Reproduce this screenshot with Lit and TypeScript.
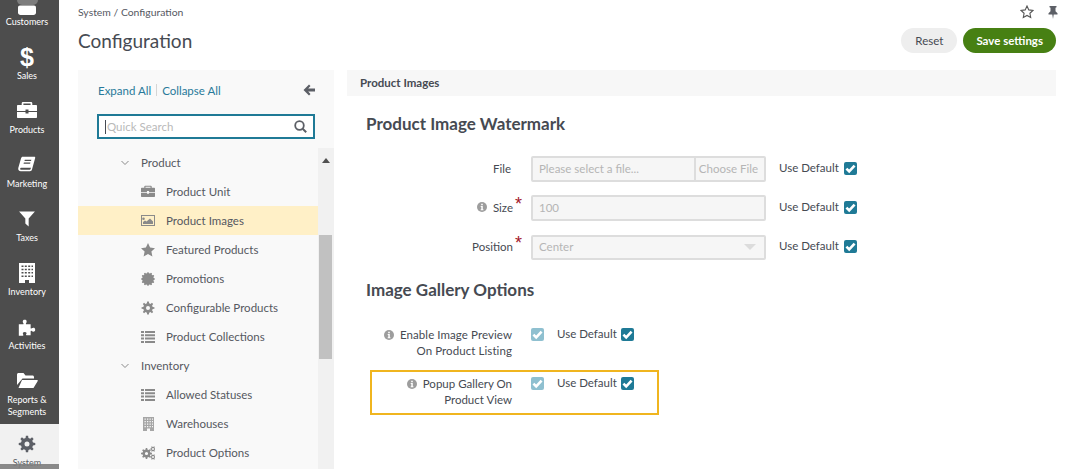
import { LitElement, css, html, svg } from 'lit';
import type { TemplateResult } from 'lit';
import { customElement } from 'lit/decorators.js';

// toothed outline for gear / certificate icons
function toothed(cx: number, cy: number, outer: number, inner: number, teeth: number, hole = 0) {
  const pts: string[] = [];
  const step = (Math.PI * 2) / teeth;
  for (let i = 0; i < teeth; i++) {
    const a = i * step;
    [[-0.3, inner], [-0.17, outer], [0.17, outer], [0.3, inner]].forEach(([k, r]) => {
      const x = cx + Math.cos(a + k * step) * r;
      const y = cy + Math.sin(a + k * step) * r;
      pts.push(`${x.toFixed(2)} ${y.toFixed(2)}`);
    });
  }
  let d = `M${pts.join('L')}Z`;
  if (hole) d += `M${cx - hole} ${cy}a${hole} ${hole} 0 1 0 ${hole * 2} 0a${hole} ${hole} 0 1 0 ${-hole * 2} 0Z`;
  return d;
}

const ICONS: Record<string, TemplateResult> = {
  customers: svg`<path d="M3 12.500h14c1.200 0 2 .8 2 2v5c0 1.500-1 2.500-2.500 2.500h-13C2 22 1 21 1 19.500v-5c0-1.200.8-2 2-2z"/>`,
  briefcase: svg`<path fill-rule="evenodd" d="M6 1h8c.8 0 1.300.6 1.300 1.300V4H19c.6 0 1 .4 1 1v5H11.500V8.500h-3V10H0V5c0-.6.4-1 1-1h3.700V2.300C4.700 1.600 5.200 1 6 1zm.4 1.600V4h7.200V2.600zM0 11h8.500v1.500h3V11H20v5c0 .6-.4 1-1 1H1c-.6 0-1-.4-1-1z"/>`,
  book: svg`<path fill-rule="evenodd" d="M5.500 1H18c.8 0 1.200.6 1 1.400L15.500 15c-.3 1.200-1.100 1.900-2.300 1.900H3.200C1.200 16.900-.1 15.300.4 13.300L3.400 2.900C3.700 1.700 4.400 1 5.500 1zM7.600 4.300l-.4 1.300h7.200l.4-1.300zm-1 3l-.4 1.300h7.200l.4-1.300zM3.400 13c-.5 0-.9.4-.9 1s.4 1.100 1 1.100h9.500c.5 0 .8-.3.9-.7l.5-1.400z"/>`,
  filter: svg`<path d="M.5 1h19L12 9.500V19l-4-3.500V9.500z"/>`,
  building: svg`<path fill-rule="evenodd" d="M2 0h16v20H12v-3H8v3H2zm2.500 2.500v1.500H6.500V2.500zm3.300 0v1.500h2V2.500zm3.400 0v1.500h2V2.500zm3.300 0v1.500h1.500V2.500zm-10 3.300v1.500H6.500V5.800zm3.300 0v1.500h2V5.800zm3.400 0v1.500h2V5.800zm3.300 0v1.500h1.500V5.800zm-10 3.300v1.500H6.500V9.100zm3.300 0v1.500h2V9.100zm3.400 0v1.500h2V9.100zm3.300 0v1.500h1.500V9.100zm-10 3.300v1.500H6.500v-1.500zm3.300 0v1.500h2v-1.500zm3.400 0v1.500h2v-1.500zm3.300 0v1.500h1.500v-1.500z"/>`,
  puzzle: svg`<path d="M1 7h4.500c.8 0 1-.5.5-1.200C5 4.500 5 2 7.500 2S10 4.500 9 5.800C8.500 6.500 8.700 7 9.500 7H14v4c0 .7.500 1 1.200.5 1.300-1 3.800-1 3.800 1.500s-2.500 2.500-3.800 1.500c-.7-.5-1.200-.2-1.200.5v4H9.500c-.7 0-.8-.5-.3-1.200C10 17 9.500 15.500 7.500 15.500S5 17 5.800 18.300c.5.7.3 1.200-.4 1.200H1z"/>`,
  folder: svg`<path d="M1.500 2h5l2 2.500h7c.8 0 1.500.7 1.500 1.500v1.500H5.500L0 14V3.500C0 2.700.7 2 1.500 2zM5 9h15c.7 0 1 .6.6 1.200L16.500 17H1.500z"/>`,
  gear: svg`<path fill-rule="evenodd" d=${toothed(10, 10, 10, 7.400, 8, 3)}/>`,
  image: svg`<path fill-rule="evenodd" d="M0 1h14v11H0zm1 1v9h12V2zm1.500 1.500a1.300 1.300 0 1 1 0 2.600 1.300 1.300 0 0 1 0-2.600zM2 10V8l2-1.500 1.500 1L9 4.500l3 3V10z"/>`,
  star: svg`<path d="M7 0l2.100 4.600 5 .6-3.700 3.400 1 5L7 11.100 2.600 13.600l1-5L-.1 5.200l5-.6z"/>`,
  promo: svg`<path d=${toothed(7, 7, 6.900, 5.800, 12)}/>`,
  cog: svg`<path fill-rule="evenodd" d=${toothed(7, 7, 6.500, 4.800, 8, 2)}/>`,
  list: svg`<path d="M0 1h3v2H0zm4 0h10v2H4zM0 4.300h3v2H0zm4 0h10v2H4zM0 7.600h3v2H0zm4 0h10v2H4zM0 11h3v2H0zm4 0h10v2H4z"/>`,
  warehouse: svg`<path fill-rule="evenodd" opacity=".75" d="M2 0h11v14H9v-2.500H6V14H2zm1.500 1.500v1.200h1.300V1.500zm2.500 0v1.200h1.300V1.500zm2.500 0v1.200h1.300V1.500zm2.500 0v1.200h1V1.500zm-7.500 2.500v1.200h1.300V4zM6 4v1.200h1.300V4zm2.500 0v1.200h1.300V4zM11 4v1.200h1V4zM3.500 6.500v1.200h1.300V6.500zm2.500 0v1.200h1.300V6.500zm2.500 0v1.200h1.300V6.500zm2.500 0v1.200h1V6.500zM3.500 9v1.200h1.300V9zM6 9v1.200h1.300V9zm2.500 0v1.200h1.300V9zM11 9v1.200h1V9z"/>`,
  cogs: svg`<path fill-rule="evenodd" d=${toothed(5.500, 7.500, 5.500, 4, 8, 1.600)}/><path fill-rule="evenodd" d=${toothed(12, 3, 2.800, 2, 6, 1)}/><path fill-rule="evenodd" d=${toothed(12, 11, 2.800, 2, 6, 1)}/>`,
};

const NAV = [
  { label: 'Customers', icon: 'customers', box: '0 0 20 20' },
  { label: 'Sales', icon: 'dollar', box: '' },
  { label: 'Products', icon: 'briefcase', box: '0 0 20 20' },
  { label: 'Marketing', icon: 'book', box: '-1 -1 22 22' },
  { label: 'Taxes', icon: 'filter', box: '-2 -2 24 24' },
  { label: 'Inventory', icon: 'building', box: '0 0 20 20' },
  { label: 'Activities', icon: 'puzzle', box: '-1 -1 22 22' },
  { label: 'Reports & Segments', icon: 'folder', box: '0 0 20 20' },
  { label: 'System', icon: 'gear', box: '-2 -2 24 24', active: true },
];

const TREE = [
  { label: 'Product', group: true },
  { label: 'Product Unit', icon: 'briefcase', box: '0 0 20 20' },
  { label: 'Product Images', icon: 'image', active: true },
  { label: 'Featured Products', icon: 'star' },
  { label: 'Promotions', icon: 'promo' },
  { label: 'Configurable Products', icon: 'cog' },
  { label: 'Product Collections', icon: 'list' },
  { label: 'Inventory', group: true },
  { label: 'Allowed Statuses', icon: 'list' },
  { label: 'Warehouses', icon: 'warehouse' },
  { label: 'Product Options', icon: 'cogs' },
];

const info = html`<svg class="info" viewBox="0 0 10 10"><circle cx="5" cy="5" r="5" fill="#9d9d9d"/><path d="M4.200 1.700h1.600v1.500H4.200zM3.700 4h2.100v3.200h.6v1H3.700v-1h.6V5h-.6z" fill="#fff"/></svg>`;
const tick = html`<svg viewBox="0 0 14 14"><path d="M2.600 7.200l3 3 5.800-6.300" fill="none" stroke="#fff" stroke-width="2.800"/></svg>`;
const useDefault = html`<span class="default"><span>Use Default</span><span class="check">${tick}</span></span>`;

@customElement('app-root')
export class AppRoot extends LitElement {
  public static styles = css`
    :host {
      display: flex;
      width: 1073px;
      height: 469px;
      overflow: hidden;
      background: #fff;
      color: #464a52;
      font-family: Lato, 'Liberation Sans', sans-serif;
      font-size: 12px;
    }

    /* left rail */
    .rail {
      position: relative;
      flex: 0 0 59px;
      height: 469px;
      overflow: hidden;
      background: #4d4d4d;
    }

    .nav {
      display: flex;
      flex-direction: column;
      align-items: center;
      box-sizing: border-box;
      width: 54px;
      padding: 11px 0 8px;
      color: #fff;
      font-size: 9px;
      line-height: 12px;
      text-align: center;
    }

    .nav:first-child {
      margin-top: -18px;
    }

    .nav svg {
      display: block;
      width: 20px;
      height: 20px;
      margin-bottom: 3px;
      overflow: visible;
      fill: currentColor;
    }

    .nav .dollar {
      height: 20px;
      margin-bottom: 3px;
      font: bold 25px/20px 'Liberation Sans', sans-serif;
    }

    .nav.active {
      width: 59px;
      margin-top: -2px;
      padding: 10px 5px 10px 0;
      background: #f1f1f1;
      color: #5c5f66;
    }

    .rail-head {
      position: absolute;
      top: 0;
      left: 17px;
      width: 21px;
      height: 5px;
      border-radius: 0 0 8px 8px;
      background: #7d7d7d;
    }

    .rail-foot {
      position: absolute;
      left: 0;
      right: 0;
      bottom: 0;
      height: 5px;
      background: rgba(125, 125, 125, 0.9);
    }

    .main {
      flex: 1;
      min-width: 0;
      padding: 0 17px 0 19px;
    }

    .crumbs {
      display: flex;
      justify-content: space-between;
      align-items: center;
      height: 24px;
      color: #55585f;
      font-size: 10.400px;
    }

    .pins {
      display: flex;
      gap: 12px;
      margin-right: -4px;
    }

    .pins svg {
      display: block;
      width: 14px;
      height: 14px;
    }

    .head {
      display: flex;
      justify-content: space-between;
      align-items: center;
      box-sizing: border-box;
      height: 46px;
      padding-bottom: 13px;
    }

    h1 {
      margin: 0;
      color: #464a52;
      font-size: 19px;
      font-weight: 400;
    }

    .actions {
      display: flex;
      gap: 6px;
    }

    button {
      height: 25px;
      padding: 0 14px;
      border: 0;
      border-radius: 13px;
      background: #eeeeee;
      color: #464a52;
      font: inherit;
      font-size: 11.500px;
    }

    button.save {
      padding: 0 13px;
      background: #478013;
      color: #fff;
      font-weight: 700;
    }

    .cols {
      display: flex;
      gap: 13px;
    }

    /* tree panel */
    .tree {
      flex: 0 0 256px;
      height: 399px;
      overflow: hidden;
      background: #f9f9f9;
    }

    .tree-top {
      display: flex;
      align-items: center;
      height: 42px;
      padding: 0 19px 2px 20px;
      box-sizing: border-box;
      color: #28799a;
      font-size: 11.500px;
    }

    .tree-top i {
      width: 1px;
      height: 12px;
      margin: 0 5px;
      background: #d5d5d5;
    }

    .tree-top svg {
      display: block;
      width: 12px;
      height: 12px;
      margin-left: auto;
    }

    .search {
      display: flex;
      align-items: center;
      justify-content: space-between;
      box-sizing: border-box;
      height: 25px;
      margin: 2px 19px 0 19px;
      padding: 0 6px 0 6px;
      border: 2px solid #1f7a96;
      background: #fff;
      color: #b9b9b9;
      font-size: 11.500px;
    }

    .search span {
      padding-left: 1px;
      border-left: 1px solid #464a52;
      line-height: 14px;
    }

    .search svg {
      display: block;
      width: 13px;
      height: 13px;
    }

    .tree-body {
      display: flex;
      margin-top: 9px;
    }

    .rows {
      flex: 1;
    }

    .row {
      display: flex;
      align-items: center;
      box-sizing: border-box;
      height: 29px;
      padding-left: 63px;
      color: #55585f;
      font-size: 11.500px;
    }

    .row.active {
      background: #fff0c7;
    }

    .row svg {
      display: block;
      flex: none;
      width: 14px;
      height: 14px;
      margin-right: 11px;
      fill: #8a8a8a;
    }

    .row.group {
      padding-left: 43px;
    }

    .row.group svg {
      width: 8px;
      height: 8px;
      margin-right: 12px;
      fill: none;
      stroke: #8a8a8a;
    }

    .scroll {
      flex: 0 0 16px;
      height: 321px;
      background: #f1f1f1;
    }

    .scroll .up {
      width: 0;
      margin: 10px auto 0;
      border: 4px solid transparent;
      border-top: 0;
      border-bottom: 5px solid #505050;
    }

    .scroll .thumb {
      width: 13px;
      height: 124px;
      margin: 72px 0 0 1px;
      background: #c1c1c1;
    }

    /* form side */
    .form {
      flex: 1;
      min-width: 0;
    }

    .bar {
      height: 26px;
      padding-left: 13px;
      background: #f7f7f7;
      color: #464a52;
      font-size: 11.500px;
      font-weight: 700;
      line-height: 26px;
    }

    h2 {
      margin: 0;
      padding-left: 19px;
      color: #464a52;
      font-size: 17px;
      font-weight: 700;
      line-height: 20px;
    }

    h2.first {
      margin-top: 18px;
      margin-bottom: 22px;
    }

    h2.second {
      margin-top: 20px;
      margin-bottom: 26px;
    }

    .field {
      display: flex;
      align-items: center;
      height: 26px;
      margin-bottom: 13px;
      color: #464a52;
      font-size: 11.500px;
    }

    .label {
      display: flex;
      justify-content: flex-end;
      align-items: center;
      gap: 6px;
      flex: 0 0 164px;
      padding-bottom: 2px;
      box-sizing: border-box;
      text-align: right;
    }

    .label sup {
      width: 8px;
      margin: -3px -11px 0 -5px;
      color: #a3172a;
      font: 18px/12px 'Liberation Sans', sans-serif;
      align-self: flex-start;
    }

    .info {
      display: block;
      flex: none;
      width: 10px;
      height: 10px;
    }

    .control {
      display: flex;
      justify-content: space-between;
      box-sizing: border-box;
      flex: 0 0 235px;
      height: 26px;
      margin-left: 20px;
      padding-left: 6px;
      border: 2px solid #dddddd;
      border-radius: 2px;
      background: #f6f6f6;
      color: #b5b5b5;
      line-height: 22px;
    }

    .control.select {
      height: 25px;
      line-height: 19px;
    }

    .control.file {
      padding-left: 0;
    }

    .control.file span:first-child {
      padding-left: 6px;
    }

    .control.file span:last-child {
      padding: 0 6px 0 3px;
      border-left: 2px solid #dddddd;
    }

    .caret {
      width: 0;
      height: 0;
      margin: 7px 8px 0 0;
      border: 6px solid transparent;
      border-top: 6px solid #dcdcdc;
      border-bottom: 0;
    }

    .default {
      display: flex;
      align-items: center;
      gap: 5px;
      margin-left: 13px;
      line-height: 14px;
      padding-bottom: 2px;
    }

    .default .check {
      margin-top: 1px;
    }

    .check {
      display: block;
      flex: none;
      width: 13px;
      height: 13px;
      border-radius: 2px;
      background: #1f7a96;
    }

    .check svg {
      display: block;
      width: 13px;
      height: 13px;
    }

    .check.off {
      background: #8fc0d0;
    }

    .flag {
      display: flex;
      align-items: flex-start;
      box-sizing: border-box;
      line-height: 16px;
      font-size: 11.500px;
      color: #464a52;
    }

    .flag .label {
      display: block;
      flex-basis: 146px;
      padding-bottom: 0;
    }

    .flag .label .info {
      display: inline-block;
      margin-right: 6px;
      vertical-align: -1px;
    }

    .flag .check.off {
      margin: 1px 0 0 19px;
    }

    .flag .default {
      gap: 4px;
    }

    .flags {
      display: flex;
      flex-direction: column;
    }

    .flag.plain {
      height: 44px;
      margin-left: 19px;
      padding-top: 1px;
      letter-spacing: 0.08px;
    }

    .flag.plain .default {
      letter-spacing: 0;
    }

    .flag.mark {
      width: 289px;
      height: 45px;
      margin-left: 23px;
      padding-top: 4px;
      border: 2px solid #f0b51f;
    }

    .flag.mark .label {
      flex-basis: 140px;
    }
  `;

  private renderNav(item: (typeof NAV)[number]) {
    return html`<div class="nav ${item.active ? 'active' : ''}">
      ${item.icon === 'dollar'
        ? html`<div class="dollar">$</div>`
        : html`<svg viewBox=${item.box}>${ICONS[item.icon]}</svg>`}
      <span>${item.label}</span>
    </div>`;
  }

  private renderRow(row: (typeof TREE)[number]) {
    if (row.group) {
      return html`<div class="row group">
        <svg viewBox="0 0 8 8"><path d="M.5 2l3.500 3.500L7.500 2"/></svg>${row.label}
      </div>`;
    }
    return html`<div class="row ${row.active ? 'active' : ''}">
      <svg viewBox=${row.box ?? '0 0 14 14'}>${ICONS[row.icon!]}</svg>${row.label}
    </div>`;
  }

  public render(): TemplateResult {
    return html`
      <div class="rail">
        ${NAV.map((n) => this.renderNav(n))}
        <div class="rail-head"></div>
        <div class="rail-foot"></div>
      </div>
      <div class="main">
        <div class="crumbs">
          <span>System / Configuration</span>
          <span class="pins">
            <svg viewBox="0 0 14 14"><path d="M7 1l1.800 3.900 4.200.5-3.100 2.900.8 4.200L7 10.400l-3.700 2.100.8-4.200L1 5.400l4.200-.5z" fill="none" stroke="#555" stroke-width="1.100"/></svg>
            <svg viewBox="0 0 14 14"><path d="M3.500 1h7v1.200l-1 .5v3.500l2 2v1.300H7.700L7 14l-.7-4.500H2.500V8.200l2-2V2.700l-1-.5z" fill="#5c5f66"/></svg>
          </span>
        </div>
        <div class="head">
          <h1>Configuration</h1>
          <div class="actions">
            <button>Reset</button>
            <button class="save">Save settings</button>
          </div>
        </div>
        <div class="cols">
          <div class="tree">
            <div class="tree-top">
              <span>Expand All</span><i></i><span>Collapse All</span>
              <svg viewBox="0 0 12 12"><path d="M6 .5L.5 6 6 11.500l1.500-1.500L5.200 7.500H12v-3H5.200L7.500 2z" fill="#5c5f66"/></svg>
            </div>
            <div class="search">
              <span>Quick Search</span>
              <svg viewBox="0 0 13 13"><circle cx="5.500" cy="5.500" r="4.300" fill="none" stroke="#5c5f66" stroke-width="1.800"/><path d="M8.700 8.700l3.500 3.500" stroke="#5c5f66" stroke-width="2"/></svg>
            </div>
            <div class="tree-body">
              <div class="rows">${TREE.map((r) => this.renderRow(r))}</div>
              <div class="scroll"><div class="up"></div><div class="thumb"></div></div>
            </div>
          </div>
          <div class="form">
            <div class="bar">Product Images</div>
            <h2 class="first">Product Image Watermark</h2>
            <div class="field">
              <div class="label">File</div>
              <div class="control file"><span>Please select a file...</span><span>Choose File</span></div>
              ${useDefault}
            </div>
            <div class="field">
              <div class="label">${info}<span>Size</span><sup>*</sup></div>
              <div class="control">100</div>
              ${useDefault}
            </div>
            <div class="field">
              <div class="label"><span>Position</span><sup>*</sup></div>
              <div class="control select">Center<span class="caret"></span></div>
              ${useDefault}
            </div>
            <h2 class="second">Image Gallery Options</h2>
            <div class="flags">
              <div class="flag plain">
                <div class="label">${info}Enable Image Preview<br />On Product Listing</div>
                <span class="check off">${tick}</span>
                ${useDefault}
              </div>
              <div class="flag mark">
                <div class="label">${info}Popup Gallery On<br />Product View</div>
                <span class="check off">${tick}</span>
                ${useDefault}
              </div>
            </div>
          </div>
        </div>
      </div>
    `;
  }
}
